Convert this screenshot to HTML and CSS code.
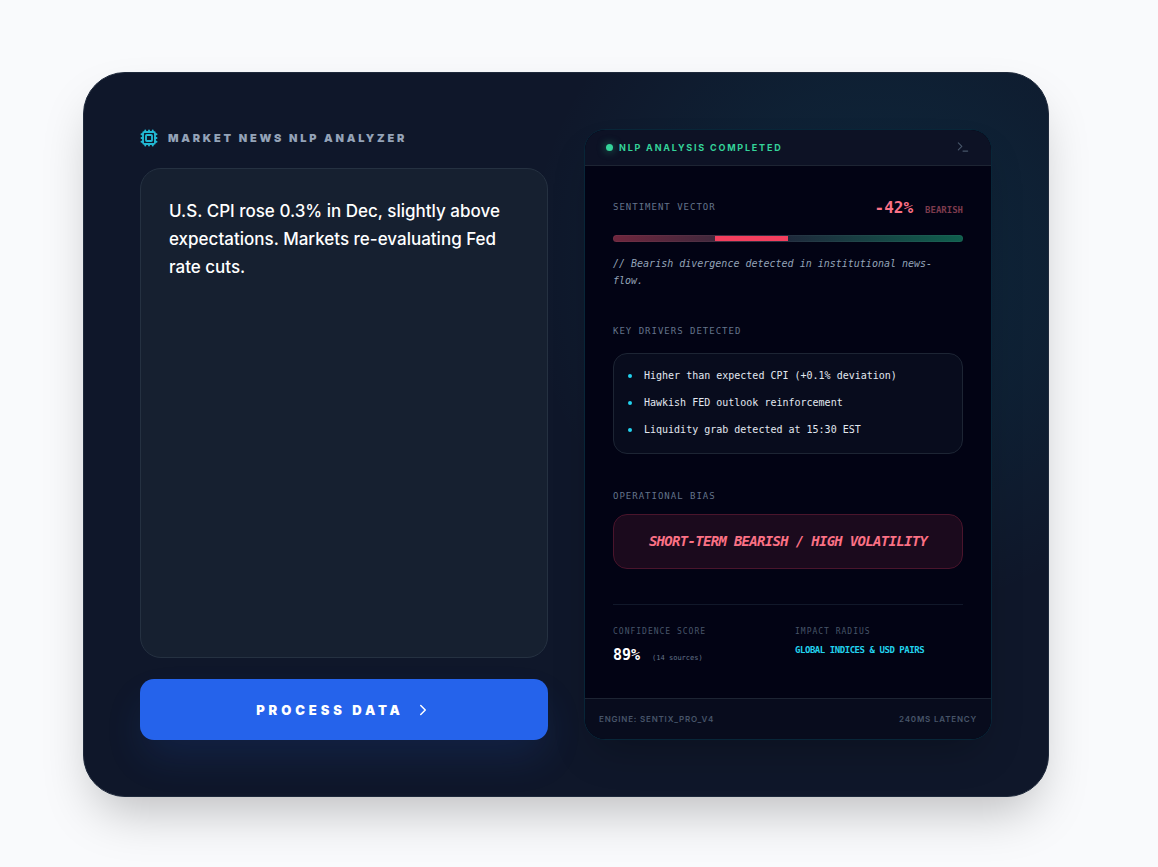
FILE: index.html
```html
<!DOCTYPE html>
<html lang="en">
<head>
  <meta charset="utf-8">
  <meta name="viewport" content="width=device-width, initial-scale=1">
  <title>Market News NLP Analyzer</title>
  <link rel="stylesheet" href="styles.css">
</head>
<body>
  <main class="card">
    <form class="input-col">
      <label class="input-title" for="news">
        <svg class="cpu-icon" viewBox="0 0 24 24" fill="none" stroke="currentColor" stroke-width="2.5" stroke-linecap="round" stroke-linejoin="round">
          <rect x="4" y="4" width="16" height="16" rx="2"/>
          <rect x="8" y="8" width="8" height="8" rx="1"/>
          <path d="M12 20v2M12 2v2M17 20v2M17 2v2M2 12h2M2 17h2M2 7h2M20 12h2M20 17h2M20 7h2M7 20v2M7 2v2"/>
        </svg>
        Market News NLP Analyzer
      </label>
      <textarea class="news" id="news">U.S. CPI rose 0.3% in Dec, slightly above expectations. Markets re-evaluating Fed rate cuts.</textarea>
      <button class="process-btn" type="button">
        Process Data
        <svg class="chevron" viewBox="0 0 24 24" fill="none" stroke="currentColor" stroke-width="2" stroke-linecap="round" stroke-linejoin="round"><path d="m9 18 6-6-6-6"/></svg>
      </button>
    </form>

    <section class="panel">
      <header class="panel-head">
        <span class="dot"></span>
        <span class="status">NLP Analysis Completed</span>
        <svg class="terminal" viewBox="0 0 24 24" fill="none" stroke="currentColor" stroke-width="2" stroke-linecap="round" stroke-linejoin="round"><path d="m4 17 6-6-6-6M12 19h8"/></svg>
      </header>

      <div class="panel-body">
        <div class="sentiment">
          <div class="sentiment-row">
            <h2 class="label">Sentiment Vector</h2>
            <p class="score">-42% <span class="score-tag">BEARISH</span></p>
          </div>
          <div class="bar"><div class="bar-fill"></div></div>
          <p class="note">// Bearish divergence detected in institutional news-flow.</p>
        </div>

        <div class="drivers">
          <h2 class="label">Key Drivers Detected</h2>
          <ul class="driver-list">
            <li>Higher than expected CPI (+0.1% deviation)</li>
            <li>Hawkish FED outlook reinforcement</li>
            <li>Liquidity grab detected at 15:30 EST</li>
          </ul>
        </div>

        <div class="bias">
          <h2 class="label">Operational Bias</h2>
          <p class="bias-box">Short-Term Bearish / High Volatility</p>
        </div>

        <div class="stats">
          <div>
            <h3 class="stat-label">Confidence Score</h3>
            <p class="confidence">89% <span class="sources">(14 sources)</span></p>
          </div>
          <div>
            <h3 class="stat-label">Impact Radius</h3>
            <p class="impact">Global Indices &amp; USD Pairs</p>
          </div>
        </div>
      </div>

      <footer class="panel-foot">
        <span>Engine: SENTIX_PRO_V4</span>
        <span>240ms Latency</span>
      </footer>
    </section>
  </main>
</body>
</html>
```
FILE: styles.css
```css
* {
  box-sizing: border-box;
  margin: 0;
  padding: 0;
}

body {
  min-height: 100vh;
  padding: 72px 109px 70px 83px;
  background: #f9fafc;
  font-family: Inter, "Liberation Sans", sans-serif;
}

.card {
  display: grid;
  grid-template-columns: 1fr 1fr;
  gap: 36px;
  min-height: calc(100vh - 142px);
  padding: 56px;
  border: 1px solid #1e293b;
  border-radius: 42px;
  background: radial-gradient(circle at 82% 27%, rgba(6, 182, 212, 0.1), rgba(6, 182, 212, 0.06) 180px, rgba(6, 182, 212, 0) 350px), #0f172a;
  box-shadow: 0 25px 50px -12px rgba(0, 0, 0, 0.25);
}

/* left column */
.input-col {
  display: flex;
  flex-direction: column;
}

.input-title {
  display: flex;
  align-items: center;
  gap: 10px;
  height: 18px;
  margin-bottom: 21px;
  color: #94a3b8;
  font-size: 11px;
  font-weight: 900;
  letter-spacing: 0.25em;
  text-transform: uppercase;
}

.cpu-icon {
  width: 18px;
  height: 18px;
  color: #22b8d3;
}

.news {
  flex: 1;
  width: 100%;
  padding: 28px;
  border: 1px solid #253141;
  border-radius: 21px;
  background: #162030;
  color: #fff;
  font-family: inherit;
  font-size: 17px;
  font-weight: 450;
  line-height: 28px;
  resize: none;
  outline: none;
}

.process-btn {
  display: flex;
  align-items: center;
  justify-content: center;
  gap: 10px;
  height: 61px;
  margin-top: 21px;
  border: 0;
  border-radius: 14px;
  background: #2563eb;
  box-shadow: 0 20px 40px -5px rgba(37, 99, 235, 0.15);
  color: #fff;
  font-family: inherit;
  font-size: 13px;
  font-weight: 900;
  letter-spacing: 0.3em;
  text-transform: uppercase;
  cursor: pointer;
}

.chevron {
  width: 18px;
  height: 18px;
}

/* result panel */
.panel {
  display: flex;
  flex-direction: column;
  overflow: hidden;
  border: 1px solid #082638;
  border-radius: 21px;
  background: #020314;
  box-shadow: 0 20px 40px -12px rgba(0, 0, 0, 0.25);
}

.panel-head {
  display: flex;
  align-items: center;
  height: 36px;
  padding: 0 21px 1px;
  border-bottom: 1px solid #1d2433;
  background: #0d1225;
}

.dot {
  width: 7px;
  height: 7px;
  margin-right: 6px;
  border-radius: 50%;
  background: #34d399;
  box-shadow: 0 0 8px rgba(52, 211, 153, 0.6);
}

.status {
  color: #34d399;
  font-size: 9px;
  font-weight: 700;
  letter-spacing: 0.2em;
  text-transform: uppercase;
}

.terminal {
  width: 14px;
  height: 14px;
  margin-left: auto;
  color: #475569;
}

.panel-body {
  display: flex;
  flex: 1;
  flex-direction: column;
  gap: 35px;
  padding: 28px;
  font-family: Consolas, "DejaVu Sans Mono", monospace;
}

.label {
  color: #64748b;
  font-size: 9px;
  font-weight: 400;
  line-height: 14px;
  letter-spacing: 1px;
  text-transform: uppercase;
}

.sentiment-row {
  display: flex;
  align-items: center;
  justify-content: space-between;
  height: 26px;
}

.score {
  display: flex;
  align-items: baseline;
  gap: 12px;
  color: #fb7185;
  font-size: 16px;
  font-weight: 700;
}

.score-tag {
  color: #7d3b4d;
  font-size: 9px;
  font-weight: 700;
}

.bar {
  height: 7px;
  margin: 15px 0 13px;
  overflow: hidden;
  border: 1px solid rgba(255, 255, 255, 0.04);
  border-radius: 4px;
  background: linear-gradient(to right, #6f263d, #1e293b, #0f5f4d) border-box;
}

.bar-fill {
  width: 21%;
  height: 100%;
  margin-left: 29%;
  background: #f43f5e;
}

.note {
  padding-right: 14px;
  color: #94a3b8;
  font-size: 10px;
  font-style: italic;
  line-height: 17px;
}

.driver-list {
  display: flex;
  flex-direction: column;
  gap: 10px;
  margin-top: 15px;
  padding: 13px 14px 15px;
  border: 1px solid #1d2534;
  border-radius: 14px;
  background: #080c1d;
  list-style: none;
}

.driver-list li {
  display: flex;
  align-items: center;
  gap: 12px;
  color: #e2e8f0;
  font-size: 10px;
  line-height: 17px;
}

.driver-list li::before {
  content: "";
  width: 4px;
  height: 4px;
  border-radius: 50%;
  background: #22d3ee;
}

.bias-box {
  margin-top: 11px;
  padding: 16px;
  border: 1px solid #4a152c;
  border-radius: 14px;
  background: #1b0a1d;
  color: #fb7185;
  font-size: 14px;
  font-style: italic;
  font-weight: 700;
  line-height: 21px;
  letter-spacing: -0.05em;
  text-align: center;
  text-transform: uppercase;
}

.stats {
  display: grid;
  grid-template-columns: 1fr 1fr;
  gap: 14px;
  padding-top: 21px;
  border-top: 1px solid #11182a;
}

.stat-label {
  margin-bottom: 5px;
  color: #475569;
  font-size: 8px;
  font-weight: 400;
  line-height: 12px;
  letter-spacing: 1px;
  text-transform: uppercase;
}

.confidence {
  display: flex;
  align-items: baseline;
  gap: 12px;
  color: #fff;
  font-size: 15px;
  font-weight: 700;
  line-height: 24px;
}

.sources {
  color: #64748b;
  font-size: 7px;
  font-weight: 400;
}

.impact {
  color: #22d3ee;
  font-size: 9px;
  font-weight: 700;
  line-height: 14px;
  letter-spacing: -0.05em;
  text-transform: uppercase;
}

.panel-foot {
  display: flex;
  align-items: center;
  justify-content: space-between;
  height: 41px;
  padding: 0 14px;
  border-top: 1px solid #1d2433;
  background: #080c1d;
  color: #475569;
  font-size: 8px;
  font-weight: 600;
  letter-spacing: 0.1em;
  text-transform: uppercase;
}

@media (max-width: 900px) {
  body {
    padding: 24px;
  }

  .card {
    grid-template-columns: 1fr;
    padding: 24px;
  }

  .news {
    min-height: 240px;
  }
}
```
